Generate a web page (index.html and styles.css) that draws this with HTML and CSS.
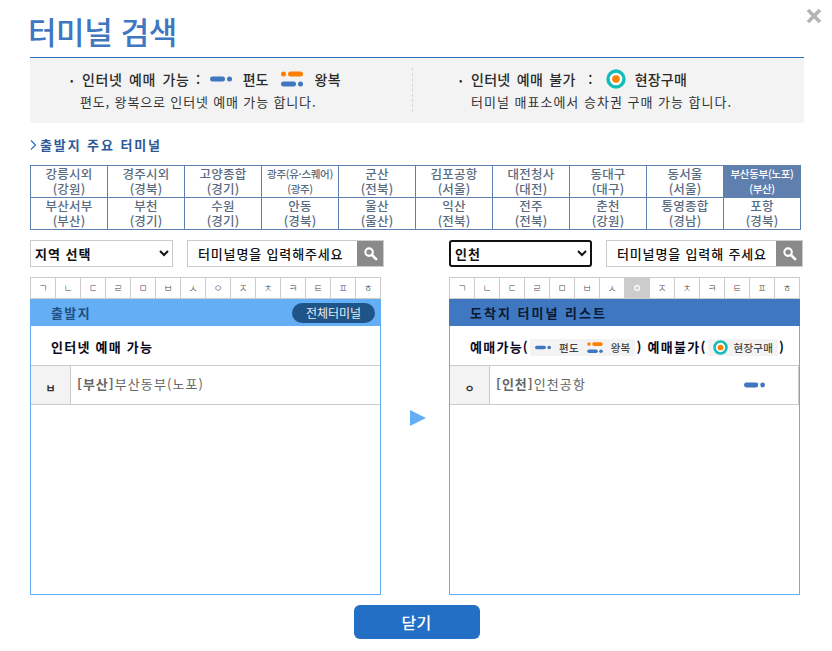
FILE: index.html
```html
<!DOCTYPE html>
<html lang="ko">
<head>
<meta charset="utf-8">
<title>터미널 검색</title>
<link rel="stylesheet" href="styles.css">
</head>
<body>
<svg class="defs" width="0" height="0" aria-hidden="true">
  <symbol id="one" viewBox="0 0 22 6"><rect x="0" y="0.5" width="15" height="5" rx="2.5" fill="#3f77c1"/><circle cx="19.5" cy="3" r="2.5" fill="#3f77c1"/></symbol>
  <symbol id="round" viewBox="0 0 22 17"><circle cx="2.5" cy="3" r="2.5" fill="#ff7f00"/><rect x="7" y="0.5" width="15" height="5" rx="2.5" fill="#ff7f00"/><rect x="0" y="10.5" width="15" height="5" rx="2.5" fill="#3f77c1"/><circle cx="19.5" cy="13" r="2.5" fill="#3f77c1"/></symbol>
  <symbol id="site" viewBox="0 0 20 20"><circle cx="10" cy="10" r="8" fill="#fff" stroke="#12bdb9" stroke-width="3.4"/><circle cx="10" cy="10" r="3.8" fill="#ff7f00"/></symbol>
  <symbol id="search" viewBox="0 0 16 16"><circle cx="6.5" cy="6.5" r="4" fill="none" stroke="#fff" stroke-width="2.2"/><path d="M9.6 9.6 14 14" stroke="#fff" stroke-width="2.8" stroke-linecap="round"/></symbol>
</svg>
<main class="page">
  <header class="title-row">
    <h1 class="title">터미널 검색</h1>
    <button class="close" aria-label="닫기"><svg width="16" height="16" viewBox="0 0 16 16"><path d="M2 2 14 14M14 2 2 14" stroke="#b4b4b4" stroke-width="3.6"/></svg></button>
  </header>

  <section class="info">
    <div class="info-col info-left">
      <p class="info-head"><span class="dot">•</span><b class="ls1">인터넷 예매 가능 :</b><svg class="i-one"><use href="#one"/></svg><b class="gap-a">편도</b><svg class="i-round"><use href="#round"/></svg><b class="gap-b">왕복</b></p>
      <p class="info-sub">편도, 왕복으로 인터넷 예매 가능 합니다.</p>
    </div>
    <div class="info-col info-right">
      <p class="info-head"><span class="dot">•</span><b class="ls2">인터넷 예매 불가 &nbsp;:</b><svg class="i-site"><use href="#site"/></svg><b class="gap-c">현장구매</b></p>
      <p class="info-sub">터미널 매표소에서 승차권 구매 가능 합니다.</p>
    </div>
  </section>

  <h2 class="major"><svg width="7" height="10" viewBox="0 0 7 10"><path d="M1 .5 5.5 5 1 9.5" fill="none" stroke="#2a6fc0" stroke-width="1.2"/></svg>출발지 주요 터미널</h2>

  <div class="grid">
    <a class="cell">강릉시외<br>(강원)</a><a class="cell">경주시외<br>(경북)</a><a class="cell">고양종합<br>(경기)</a><a class="cell small">광주(유·스퀘어)<br>(광주)</a><a class="cell">군산<br>(전북)</a><a class="cell">김포공항<br>(서울)</a><a class="cell">대전청사<br>(대전)</a><a class="cell">동대구<br>(대구)</a><a class="cell">동서울<br>(서울)</a><a class="cell small on">부산동부(노포)<br>(부산)</a>
    <a class="cell">부산서부<br>(부산)</a><a class="cell">부천<br>(경기)</a><a class="cell">수원<br>(경기)</a><a class="cell">안동<br>(경북)</a><a class="cell">울산<br>(울산)</a><a class="cell">익산<br>(전북)</a><a class="cell">전주<br>(전북)</a><a class="cell">춘천<br>(강원)</a><a class="cell">통영종합<br>(경남)</a><a class="cell">포항<br>(경북)</a>
  </div>

  <div class="columns">
    <section class="col">
      <div class="filters">
        <select class="sel"><option>지역 선택</option></select>
        <div class="search"><span class="search-text">터미널명을 입력해주세요</span><span class="search-btn"><svg width="15" height="15"><use href="#search"/></svg></span></div>
      </div>
      <div class="panel">
        <div class="alpha"><span>ㄱ</span><span>ㄴ</span><span>ㄷ</span><span>ㄹ</span><span>ㅁ</span><span>ㅂ</span><span>ㅅ</span><span>ㅇ</span><span>ㅈ</span><span>ㅊ</span><span>ㅋ</span><span>ㅌ</span><span>ㅍ</span><span>ㅎ</span></div>
        <div class="box">
          <div class="bar bar-light"><span>출발지</span><span class="all">전체터미널</span></div>
          <div class="note">인터넷 예매 가능</div>
          <div class="row"><span class="row-key">ㅂ</span><span class="row-name"><b>[부산]</b>부산동부(노포)</span></div>
        </div>
      </div>
    </section>

    <div class="arrow"><svg width="16" height="16" viewBox="0 0 16 16"><path d="M0 0 16 8 0 16Z" fill="#64aef5"/></svg></div>

    <section class="col">
      <div class="filters">
        <select class="sel sel-on"><option>인천</option></select>
        <div class="search"><span class="search-text">터미널명을 입력해 주세요</span><span class="search-btn"><svg width="15" height="15"><use href="#search"/></svg></span></div>
      </div>
      <div class="panel">
        <div class="alpha"><span>ㄱ</span><span>ㄴ</span><span>ㄷ</span><span>ㄹ</span><span>ㅁ</span><span>ㅂ</span><span>ㅅ</span><span class="on">ㅇ</span><span>ㅈ</span><span>ㅊ</span><span>ㅋ</span><span>ㅌ</span><span>ㅍ</span><span>ㅎ</span></div>
        <div class="box">
          <div class="bar bar-dark"><span>도착지 터미널 리스트</span></div>
          <div class="note note-r">예매가능(<span class="chip"><svg class="c-one"><use href="#one"/></svg>편도<svg class="c-round"><use href="#round"/></svg>왕복</span>) 예매불가(<span class="chip"><svg class="c-site"><use href="#site"/></svg>현장구매</span>)</div>
          <div class="row row-r"><span class="row-key">ㅇ</span><span class="row-name"><b>[인천]</b>인천공항</span><svg class="row-icon"><use href="#one"/></svg></div>
        </div>
      </div>
    </section>
  </div>

  <div class="foot"><button class="done">닫기</button></div>
</main>
</body>
</html>
```
FILE: styles.css
```css
* { box-sizing: border-box; }
html, body { margin: 0; padding: 0; background: #fff; }
body { font-family: "Noto Sans CJK KR", "Noto Sans", sans-serif; color: #222; overflow: hidden; }
.defs { position: absolute; }
.page { width: 832px; height: 651px; padding: 0 28px 0 30px; }

.title-row { height: 58px; display: flex; justify-content: space-between; align-items: flex-start; border-bottom: 1px solid #2e6db8; position: relative; }
.title { margin: 9px 0 0 -2px; font-size: 31px; line-height: 44px; font-weight: 500; color: #3f77c1; letter-spacing: -.4px; }
.close { position: absolute; right: -18px; top: 8px; width: 16px; height: 16px; padding: 0; border: 0; background: none; }

.info { height: 65px; background: #f3f3f3; display: flex; }
.info-col { padding-top: 9px; position: relative; }
.info-left { width: 383px; padding-left: 40px; }
.info-right { flex: 1; padding-left: 46px; }
.info-left::after { content: ""; position: absolute; right: 0; top: 10px; height: 44px; border-right: 1px dashed #d4d4d4; }
.info-head { margin: 0; display: flex; align-items: center; height: 24px; font-size: 14px; color: #2a2a2a; white-space: nowrap; }
.info-head b { font-weight: 500; }
.dot { width: 12px; font-size: 10px; }
.ls1 { letter-spacing: .6px; word-spacing: 2px; }
.ls2 { letter-spacing: .3px; word-spacing: 2px; }
.i-one { width: 22px; height: 6px; margin-left: 9px; }
.gap-a { margin-left: 11px; letter-spacing: 0; }
.i-round { width: 22px; height: 17px; margin-left: 13px; }
.gap-b { margin-left: 11px; letter-spacing: .5px; }
.i-site { width: 20px; height: 20px; margin-left: 13px; }
.gap-c { margin-left: 9px; letter-spacing: .2px; }
.info-sub { margin: 2px 0 0 10px; font-size: 13px; line-height: 18px; letter-spacing: .85px; color: #333; white-space: nowrap; }
.info-right .info-sub { margin-left: 12px; letter-spacing: 1px; }

.major { margin: 13px 0 0; height: 18px; display: flex; align-items: center; gap: 3px; font-size: 13px; font-weight: 700; line-height: 18px; letter-spacing: 1.9px; color: #2d5a97; white-space: nowrap; }

.grid { margin-top: 11px; width: 771px; display: grid; grid-template-columns: repeat(10, 77px); grid-auto-rows: 32px; border-top: 1px solid #5f7fae; border-left: 1px solid #5f7fae; }
.cell { border-right: 1px solid #5f7fae; border-bottom: 1px solid #5f7fae; font-size: 12.5px; line-height: 15px; font-weight: 500; text-align: center; color: #5a6b80; letter-spacing: .2px; white-space: nowrap; }
.cell.small { font-size: 10.5px; letter-spacing: -.3px; }
.cell.on { background: #5f7fae; color: #fff; }

.columns { display: flex; align-items: flex-start; margin-top: 10px; }
.col { width: 354px; flex: none; }
.arrow { width: 65px; flex: none; padding: 170px 0 0 26px; height: 200px; }
.arrow svg { display: block; }

.filters { display: flex; justify-content: space-between; height: 27px; }
.sel { width: 143px; height: 27px; background: #fff; border: 1px solid #ccc; padding: 0; font: 700 13px "Noto Sans CJK KR", sans-serif; letter-spacing: 1px; color: #111; border-radius: 0; }
.sel-on { border: 2px solid #111; border-radius: 3px; }
.search { width: 197px; height: 27px; display: flex; border: 1px solid #ccc; background: #fff; }
.search-text { flex: 1; padding-left: 10px; font-size: 13px; line-height: 25px; font-weight: 500; letter-spacing: .85px; color: #111; white-space: nowrap; }
.search-btn { width: 26px; background: #8a8a8a; display: flex; align-items: center; justify-content: center; }

.panel { width: 351px; margin-top: 10px; }
.alpha { display: grid; grid-template-columns: repeat(14, 25px); height: 22px; border-top: 1px solid #ccc; border-left: 1px solid #ccc; }
.alpha span { border-right: 1px solid #ccc; border-bottom: 1px solid #ccc; font-size: 10px; line-height: 20px; text-align: center; color: #444; font-weight: 300; }
.alpha span.on { background: #ccc; color: #fff; font-weight: 700; }
.box { height: 296px; border: 1px solid #64aef5; border-top: 0; }
.bar { height: 27px; margin: 0 -1px; padding: 0 6px 0 21px; display: flex; align-items: center; justify-content: space-between; font-size: 13px; font-weight: 700; letter-spacing: 1.4px; white-space: nowrap; }
.bar-light { background: #64aef5; color: #1f4f82; }
.bar-dark { background: #3f77c1; color: #0b1a33; letter-spacing: 2px; }
.all { height: 20px; width: 83px; border-radius: 10px; background: #1f5488; color: #e4ecf4; text-align: center; font-size: 12px; line-height: 19px; font-weight: 400; letter-spacing: 0; }
.note { height: 40px; padding: 2px 0 0 20px; display: flex; align-items: center; font-size: 13px; font-weight: 700; letter-spacing: 1.25px; color: #0a0a1e; border-bottom: 1px solid #ccc; white-space: nowrap; }
.chip { height: 17px; display: inline-flex; align-items: center; background: #f3f3f3; font-size: 10.5px; font-weight: 500; letter-spacing: .2px; color: #444; margin: 2px 1px 0 1px; padding: 0 5px; }
.c-one { width: 16px; height: 5px; margin-right: 8px; }
.c-round { width: 16px; height: 12px; margin: 0 8px; }
.c-site { width: 15px; height: 15px; margin-right: 6px; }
.row { height: 39px; display: flex; border-bottom: 1px solid #ccc; font-size: 13px; }
.row-key { width: 40px; background: #f3f3f3; border-right: 1px solid #ccc; text-align: center; font-weight: 700; font-size: 11px; padding-top: 14px; color: #333; }
.row-name { padding: 9px 0 0 6px; letter-spacing: 1.1px; color: #666; line-height: 18px; white-space: nowrap; }
.row-name b { font-weight: 700; color: #666; letter-spacing: 1px; }
.row-r { border-right: 1px solid #ccc; position: relative; }
.row-icon { width: 21px; height: 6px; position: absolute; right: 33px; top: 16px; }

.foot { display: flex; justify-content: center; margin: 10px 0 0 -1px; }
.done { width: 126px; height: 34px; border: 0; border-radius: 6px; background: #236fc6; color: #fff; font: 500 16px "Noto Sans CJK KR", sans-serif; letter-spacing: .2px; }
```
